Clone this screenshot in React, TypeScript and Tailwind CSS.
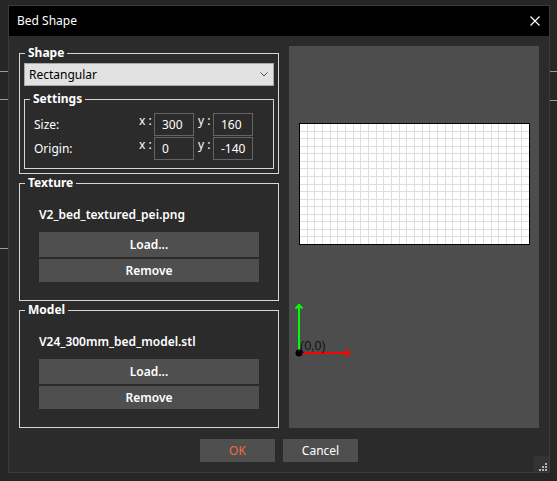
import React from "react";

function Bed() {
  const vs: number[] = [];
  for (let i = 1; i < 30; i++) vs.push(Math.round(10 + i * (230 / 30)) + 0.5);
  const hs: number[] = [];
  for (let j = 1; j < 16; j++) hs.push(Math.round(77 + j * (121 / 16)) + 0.5);
  return (
    <svg width="250" height="382" viewBox="0 0 250 382" className="block">
      <rect x="10.5" y="77.5" width="230" height="121" fill="#ffffff" />
      <g stroke="#dedede" strokeWidth="1" shapeRendering="crispEdges">
        {vs.map((x) => (
          <line key={"v" + x} x1={x} y1="78" x2={x} y2="198" />
        ))}
        {hs.map((y) => (
          <line key={"h" + y} x1="11" y1={y} x2="240" y2={y} />
        ))}
      </g>
      <rect x="10.5" y="77.5" width="230" height="121" fill="none" stroke="#000" strokeWidth="1" shapeRendering="crispEdges" />
      <g fill="none" strokeWidth="2" strokeLinecap="square">
        <line x1="10" y1="307" x2="10" y2="259" stroke="#00ff00" />
        <polyline points="6.5,262.5 10,259 13.5,262.5" stroke="#00ff00" strokeLinecap="butt" />
        <line x1="10" y1="307" x2="60" y2="307" stroke="#ff0000" />
        <polyline points="56.5,303.5 60,307 56.5,310.5" stroke="#ff0000" strokeLinecap="butt" />
      </g>
      <circle cx="10" cy="307" r="3.5" fill="#000" />
      <text x="11" y="304" fontSize="12.5" fill="#111" fontFamily="'Liberation Sans', Arial, sans-serif">
        (0,0)
      </text>
    </svg>
  );
}

function FileGroup({ title, file }: { title: string; file: string }) {
  return (
    <fieldset className="border border-[#d6d6d6] px-[19px] pt-[17px] pb-[18px] w-[260px]">
      <legend className="ml-[-14px] px-[3px] font-bold leading-[14px]">{title}</legend>
      <div className="font-semibold leading-[16px] whitespace-nowrap">{file}</div>
      <div className="mt-[9px] flex flex-col gap-[2px] w-[220px]">
        <button className="h-[25px] bg-[#4f4f4f] font-semibold leading-[16px]">Load...</button>
        <button className="h-[23px] bg-[#4f4f4f] font-semibold leading-[16px]">Remove</button>
      </div>
    </fieldset>
  );
}

function Field({ axis, value }: { axis: string; value: string }) {
  return (
    <div className="flex items-start">
      <span className="w-[15px] leading-[12px] pt-[2px] text-[12px]">{axis} :</span>
      <div className="w-[40px] h-[23px] border border-[#646464] flex items-center pl-[7px] leading-[16px] pt-[1px]">
        {value}
      </div>
    </div>
  );
}

export default function App() {
  return (
    <div className="relative w-[557px] h-[481px] overflow-hidden bg-[#262626] font-['Noto_Sans',sans-serif] text-[12px] text-white">
      <div className="absolute left-0 top-[71px] w-[8px] h-px bg-[#9a9a9a]" />
      <div className="absolute left-0 top-[99px] w-[8px] h-px bg-[#9a9a9a]" />
      <div className="absolute left-0 top-[248px] w-[8px] h-px bg-[#9a9a9a]" />
      <div className="absolute left-[550px] top-[71px] w-[7px] h-px bg-[#9a9a9a]" />
      <div className="absolute left-[550px] top-[100px] w-[7px] h-px bg-[#9a9a9a]" />

      <div className="absolute left-[8px] top-[5px] w-[542px] h-[468px] border border-[#3a3a3a] bg-[#2b2b2b] flex flex-col">
        <div className="h-[30px] bg-black flex items-center justify-between pl-[8px] pr-[9px]">
          <span className="leading-[16px]">Bed Shape</span>
          <svg width="10" height="10" viewBox="0 0 10 10">
            <path d="M0.5 0.5 L9.5 9.5 M9.5 0.5 L0.5 9.5" stroke="#fff" strokeWidth="1.2" />
          </svg>
        </div>

        <div className="flex gap-[10px] px-[10px] pt-[10px]">
          <div className="w-[260px] flex flex-col gap-[2px]">
            <fieldset className="border border-[#d6d6d6] px-[4px] pt-[3px] pb-[4px] w-[260px]">
              <legend className="ml-[1px] px-[3px] font-bold leading-[14px]">Shape</legend>
              <div className="h-[23px] w-[250px] bg-[#e1e1e1] border border-[#a8a8a8] flex items-center justify-between pl-[4px] pr-[5px] text-black leading-[16px]">
                <span>Rectangular</span>
                <svg width="8" height="5" viewBox="0 0 8 5">
                  <path d="M0.5 0.5 L4 4 L7.5 0.5" fill="none" stroke="#555" strokeWidth="1" />
                </svg>
              </div>
              <fieldset className="mt-[6px] border border-[#d6d6d6] pl-[9px] pt-[7px] pb-[8px] w-[250px]">
                <legend className="ml-[-4px] px-[3px] font-bold leading-[14px]">Settings</legend>
                <div className="flex flex-col gap-[1px]">
                  <div className="flex items-center">
                    <span className="w-[105px] leading-[16px]">Size:</span>
                    <Field axis="x" value="300" />
                    <div className="w-[4px]" />
                    <Field axis="y" value="160" />
                  </div>
                  <div className="flex items-center">
                    <span className="w-[105px] leading-[16px]">Origin:</span>
                    <Field axis="x" value="0" />
                    <div className="w-[4px]" />
                    <Field axis="y" value="-140" />
                  </div>
                </div>
              </fieldset>
            </fieldset>
            <FileGroup title="Texture" file="V2_bed_textured_pei.png" />
            <FileGroup title="Model" file="V24_300mm_bed_model.stl" />
          </div>
          <div className="w-[250px] h-[382px] bg-[#4d4d4d]">
            <Bed />
          </div>
        </div>

        <div className="flex justify-center gap-[8px] mt-[11px]">
          <button className="w-[75px] h-[23px] bg-[#4f4f4f] text-[#f26b3a] leading-[16px]">OK</button>
          <button className="w-[75px] h-[23px] bg-[#4f4f4f] text-white leading-[16px]">Cancel</button>
        </div>

        <div className="absolute right-0 bottom-0 w-[16px] h-[16px] bg-[#333333]">
          <svg width="16" height="16" viewBox="0 0 16 16" className="block">
            <g fill="#b4b4b4">
              <rect x="12" y="7" width="2" height="2" />
              <rect x="9" y="10" width="2" height="2" />
              <rect x="12" y="10" width="2" height="2" />
              <rect x="6" y="13" width="2" height="2" />
              <rect x="9" y="13" width="2" height="2" />
              <rect x="12" y="13" width="2" height="2" />
            </g>
          </svg>
        </div>
      </div>
    </div>
  );
}
